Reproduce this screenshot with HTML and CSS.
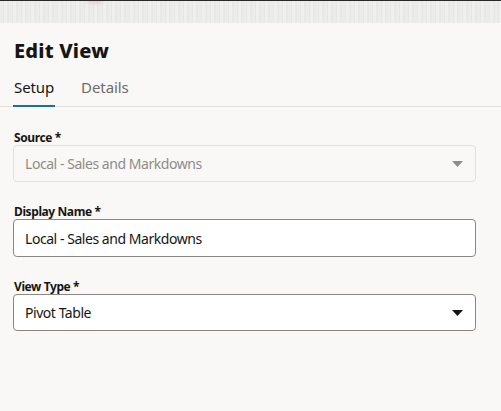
FILE: index.html
```html
<!DOCTYPE html>
<html lang="en">
<head>
<meta charset="utf-8">
<title>Edit View</title>
<link rel="stylesheet" href="styles.css">
</head>
<body>
<div class="topband"></div>
<main class="panel">
  <h1 class="title">Edit View</h1>
  <nav class="tabs">
    <span class="tab tab-active">Setup</span>
    <span class="tab">Details</span>
  </nav>
  <form class="form">
    <div class="field">
      <label class="label">Source *</label>
      <div class="box box-disabled">
        <span class="value">Local - Sales and Markdowns</span>
        <svg class="arrow" width="11" height="6" viewBox="0 0 11 6"><path d="M0 0H11L5.5 6Z" fill="#8f8c88"/></svg>
      </div>
    </div>
    <div class="field">
      <label class="label">Display Name *</label>
      <div class="box box-tall">
        <span class="value">Local - Sales and Markdowns</span>
      </div>
    </div>
    <div class="field">
      <label class="label">View Type *</label>
      <div class="box">
        <span class="value">Pivot Table</span>
        <svg class="arrow" width="11" height="6" viewBox="0 0 11 6"><path d="M0 0H11L5.5 6Z" fill="#161513"/></svg>
      </div>
    </div>
  </form>
</main>
</body>
</html>
```

FILE: styles.css
```css
* { box-sizing: border-box; }
html, body {
  margin: 0;
  padding: 0;
  background: #f9f8f6;
  font-family: "Noto Sans", "Open Sans", sans-serif;
  color: #161513;
}
body { width: 501px; height: 411px; overflow: hidden; }
.topband {
  height: 23px;
  border-top: 1px solid #2a2927;
  background:
    radial-gradient(ellipse 12px 5px at 95px 0px, rgba(225,150,150,0.35), rgba(225,150,150,0) 100%),
    repeating-linear-gradient(90deg, #ececeb 0 3px, #e6e6e5 3px 4px, #efefee 4px 7px, #e8e8e7 7px 9px);
}
.panel {
  padding: 0 25px 0 13px;
}
.title {
  margin: 0;
  padding: 14px 0 0 1px;
  font-size: 20px;
  font-weight: 800;
  line-height: 27px;
  letter-spacing: 0.2px;
}
.tabs {
  display: flex;
  gap: 25px;
  margin: 13px -25px 0 -13px;
  padding: 0 0 0 13px;
  border-bottom: 1px solid #e2dfdb;
}
.tab {
  font-size: 15px;
  line-height: 20px;
  padding: 0 1px 8px;
  color: #6f6c68;
  border-bottom: 2px solid transparent;
  margin-bottom: -1px;
  letter-spacing: -0.1px;
}
.tab-active {
  color: #161513;
  border-bottom-color: #1f7089;
}
.form {
  display: flex;
  flex-direction: column;
  gap: 22px;
  padding-top: 23px;
}
.field { display: flex; flex-direction: column; }
.label {
  font-size: 12px;
  font-weight: 700;
  line-height: 15px;
  padding-left: 1px;
  color: #161513;
  letter-spacing: -0.4px;
}
.box {
  height: 37px;
  display: flex;
  align-items: center;
  justify-content: space-between;
  padding: 0 12px 0 11px;
  background: #ffffff;
  border: 1px solid #8a8782;
  border-radius: 4px;
}
.box-tall { height: 38px; }
.box-disabled {
  background: #f9f8f6;
  border-color: #e3e0dc;
}
.value {
  font-size: 14px;
  color: #161513;
  letter-spacing: -0.45px;
}
.box-disabled .value { color: #8f8c88; }
.arrow { display: block; margin-top: 1px; }
```
